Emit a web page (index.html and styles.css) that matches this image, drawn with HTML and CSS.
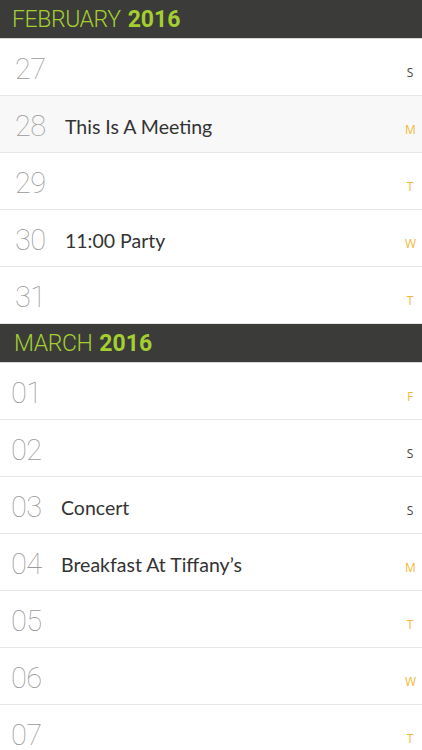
FILE: index.html
```html
<!DOCTYPE html>
<html>
<head>
<meta charset="utf-8">
<link rel="stylesheet" href="styles.css">
</head>
<body>
<div class="cal">
  <div class="month"><span class="mname">FEBRUARY</span><span class="year">2016</span></div>
  <div class="row"><span class="num">27</span><span class="ev"></span><span class="dow dark">S</span></div>
  <div class="row sel"><span class="num">28</span><span class="ev">This Is A Meeting</span><span class="dow">M</span></div>
  <div class="row"><span class="num">29</span><span class="ev"></span><span class="dow">T</span></div>
  <div class="row"><span class="num">30</span><span class="ev">11:00 Party</span><span class="dow">W</span></div>
  <div class="row"><span class="num">31</span><span class="ev"></span><span class="dow">T</span></div>
  <div class="month m2"><span class="mname">MARCH</span><span class="year">2016</span></div>
  <div class="row r2"><span class="num">01</span><span class="ev"></span><span class="dow">F</span></div>
  <div class="row r2"><span class="num">02</span><span class="ev"></span><span class="dow dark">S</span></div>
  <div class="row r2"><span class="num">03</span><span class="ev">Concert</span><span class="dow dark">S</span></div>
  <div class="row r2"><span class="num">04</span><span class="ev">Breakfast At Tiffany’s</span><span class="dow">M</span></div>
  <div class="row r2"><span class="num">05</span><span class="ev"></span><span class="dow">T</span></div>
  <div class="row r2"><span class="num">06</span><span class="ev"></span><span class="dow">W</span></div>
  <div class="row r2"><span class="num">07</span><span class="ev"></span><span class="dow">T</span></div>
</div>
</body>
</html>
```
FILE: styles.css
```css
html, body { margin: 0; padding: 0; background: #fff; }
body { width: 422px; height: 750px; overflow: hidden; }
.cal { display: flex; flex-direction: column; }
.month {
  height: 38px;
  background: #3b3b3a;
  border-bottom: 1px solid #d8d8d8;
  display: flex;
  align-items: center;
  gap: 7px;
  padding-left: 12px;
  font-family: Roboto, "Liberation Sans", sans-serif;
  font-size: 23px;
  color: #a4cf2f;
}
.month.m2 { padding-left: 14px; }
.mname { font-weight: 300; letter-spacing: -0.4px; }
.year { font-weight: 700; }
.row {
  height: 56px;
  border-bottom: 1px solid #e6e6e6;
  display: flex;
  align-items: center;
  padding: 0 7px 0 15px;
}
.row.r2 { padding-left: 11px; }
.row.sel { background: #f8f8f8; }
.num {
  font-family: Roboto, sans-serif;
  font-weight: 100;
  font-size: 29px;
  color: #9a9a9a;
  width: 30px;
  letter-spacing: -0.5px;
  padding-top: 3px;
}
.ev {
  flex: 1;
  padding-left: 20px;
  font-family: Lato, "Open Sans", sans-serif;
  font-size: 19.5px;
  color: #333;
  padding-top: 4px;
}
.dow {
  font-family: "Open Sans", sans-serif;
  font-size: 12px;
  color: #f2b83a;
  padding-top: 10px;
  width: 10px;
  text-align: center;
}
.dow.dark { color: #444; }
```
